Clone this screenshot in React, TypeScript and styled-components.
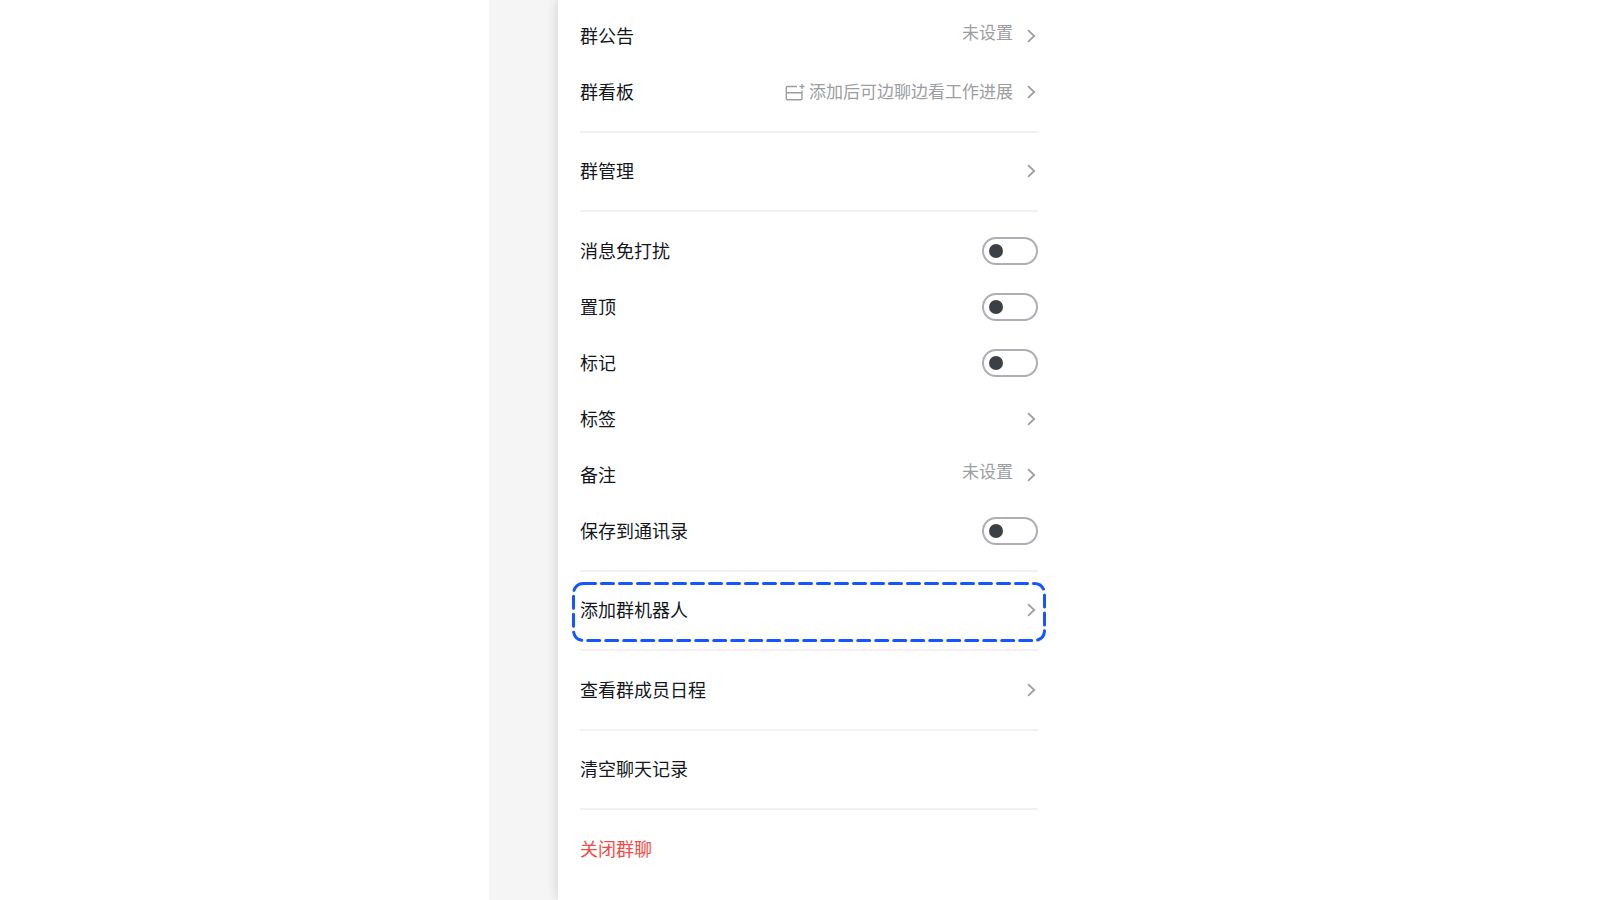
import React from "react";
import styled, { createGlobalStyle } from "styled-components";

const GlobalStyle = createGlobalStyle`
  *, *::before, *::after { box-sizing: border-box; }
  body {
    margin: 0;
    background: #ffffff;
    color: #1f2329;
    font-family: "Noto Sans CJK SC", "Microsoft YaHei", sans-serif;
  }
`;

const Frame = styled.div`
  display: flex;
  width: 100%;
  max-width: 622px;
  min-height: 100vh;
  margin: 0 auto;
  overflow: hidden;
  background: #f5f5f5;
`;

const Panel = styled.main`
  flex: 1;
  margin-left: 69px;
  padding: 8px 73px 12px 22px;
  background: #ffffff;
  box-shadow: -1px 0 10px rgba(31, 35, 41, 0.16);
`;

const Section = styled.section`
  padding: 11px 0;

  &:first-of-type {
    padding-top: 0;
  }
  &:nth-of-type(even) {
    padding-top: 10px;
  }
  &:not(:last-of-type) {
    border-bottom: 2px solid #f2f2f3;
  }
`;

const rowStyles = `
  position: relative;
  display: flex;
  align-items: center;
  justify-content: space-between;
  width: 100%;
  height: 56px;
  cursor: pointer;
`;

const ActionRow = styled.button<{ $danger?: boolean }>`
  ${rowStyles}
  padding: 0;
  border: 0;
  background: none;
  font: inherit;
  text-align: left;
  color: ${(p) => (p.$danger ? "#f54a45" : "#14171c")};
`;

const ToggleRow = styled.label`
  ${rowStyles}
  color: #14171c;
`;

const Label = styled.span`
  padding-bottom: 2px;
  font-size: 18px;
  line-height: 24px;
`;

const Trailing = styled.span`
  display: flex;
  align-items: center;
  gap: 7px;
  color: #9c9ea2;
`;

const Value = styled.span<{ $raised?: boolean }>`
  display: flex;
  align-items: center;
  gap: 4px;
  font-size: 17px;
  line-height: 24px;
  padding-bottom: ${(p) => (p.$raised ? 8 : 2)}px;
`;

const Switch = styled.input`
  appearance: none;
  display: flex;
  align-items: center;
  width: 56px;
  height: 28px;
  margin: 0;
  padding: 0 5px;
  border: 2px solid #adafb4;
  border-radius: 14px;
  background: #ffffff;
  cursor: pointer;

  &::before {
    content: "";
    width: 14px;
    height: 14px;
    border-radius: 50%;
    background: #3c4046;
  }
  &:checked {
    justify-content: flex-end;
  }
`;

const Outline = styled.svg`
  position: absolute;
  top: 0;
  left: -8px;
  width: calc(100% + 16px);
  height: 60px;
  pointer-events: none;

  rect {
    width: calc(100% - 3px);
    height: calc(100% - 3px);
  }
`;

const Chevron = () => (
  <svg width="18" height="18" viewBox="0 0 18 18" fill="none" aria-hidden="true">
    <path d="M8 3.2 14.2 9 8 14.8" stroke="currentColor" strokeWidth="1.8" />
  </svg>
);

const BoardIcon = () => (
  <svg width="20" height="20" viewBox="0 0 20 20" fill="none" aria-hidden="true">
    <path
      d="M12 5.5H2.5a1.2 1.2 0 0 0-1.2 1.2v10.9a1.2 1.2 0 0 0 1.2 1.2h13.3a1.2 1.2 0 0 0 1.2-1.2V9.5M1.3 11.8H17M17 3v5M14.5 5.5h5"
      stroke="currentColor"
      strokeWidth="1.4"
    />
  </svg>
);

const HighlightOutline = () => (
  <Outline aria-hidden="true">
    <rect
      x="1.5"
      y="1.5"
      rx="10"
      fill="none"
      stroke="#1456ff"
      strokeWidth="3"
      strokeLinecap="round"
      strokeDasharray="12 6"
    />
  </Outline>
);

type LinkItemProps = {
  label: string;
  value?: string;
  raised?: boolean;
  icon?: React.ReactNode;
  highlighted?: boolean;
};

const LinkItem = ({ label, value, raised, icon, highlighted }: LinkItemProps) => (
  <ActionRow type="button">
    <Label>{label}</Label>
    <Trailing>
      {value && (
        <Value $raised={raised}>
          {icon}
          {value}
        </Value>
      )}
      <Chevron />
    </Trailing>
    {highlighted && <HighlightOutline />}
  </ActionRow>
);

const ToggleItem = ({ id, label }: { id: string; label: string }) => (
  <ToggleRow htmlFor={id}>
    <Label>{label}</Label>
    <Switch id={id} type="checkbox" />
  </ToggleRow>
);

export default function App() {
  return (
    <>
      <GlobalStyle />
      <Frame>
        <Panel>
          <Section>
            <LinkItem label="群公告" value="未设置" raised />
            <LinkItem label="群看板" value="添加后可边聊边看工作进展" icon={<BoardIcon />} />
          </Section>
          <Section>
            <LinkItem label="群管理" />
          </Section>
          <Section>
            <ToggleItem id="mute" label="消息免打扰" />
            <ToggleItem id="pin" label="置顶" />
            <ToggleItem id="flag" label="标记" />
            <LinkItem label="标签" />
            <LinkItem label="备注" value="未设置" raised />
            <ToggleItem id="contacts" label="保存到通讯录" />
          </Section>
          <Section>
            <LinkItem label="添加群机器人" highlighted />
          </Section>
          <Section>
            <LinkItem label="查看群成员日程" />
          </Section>
          <Section>
            <ActionRow type="button">
              <Label>清空聊天记录</Label>
            </ActionRow>
          </Section>
          <Section>
            <ActionRow type="button" $danger>
              <Label>关闭群聊</Label>
            </ActionRow>
          </Section>
        </Panel>
      </Frame>
    </>
  );
}
